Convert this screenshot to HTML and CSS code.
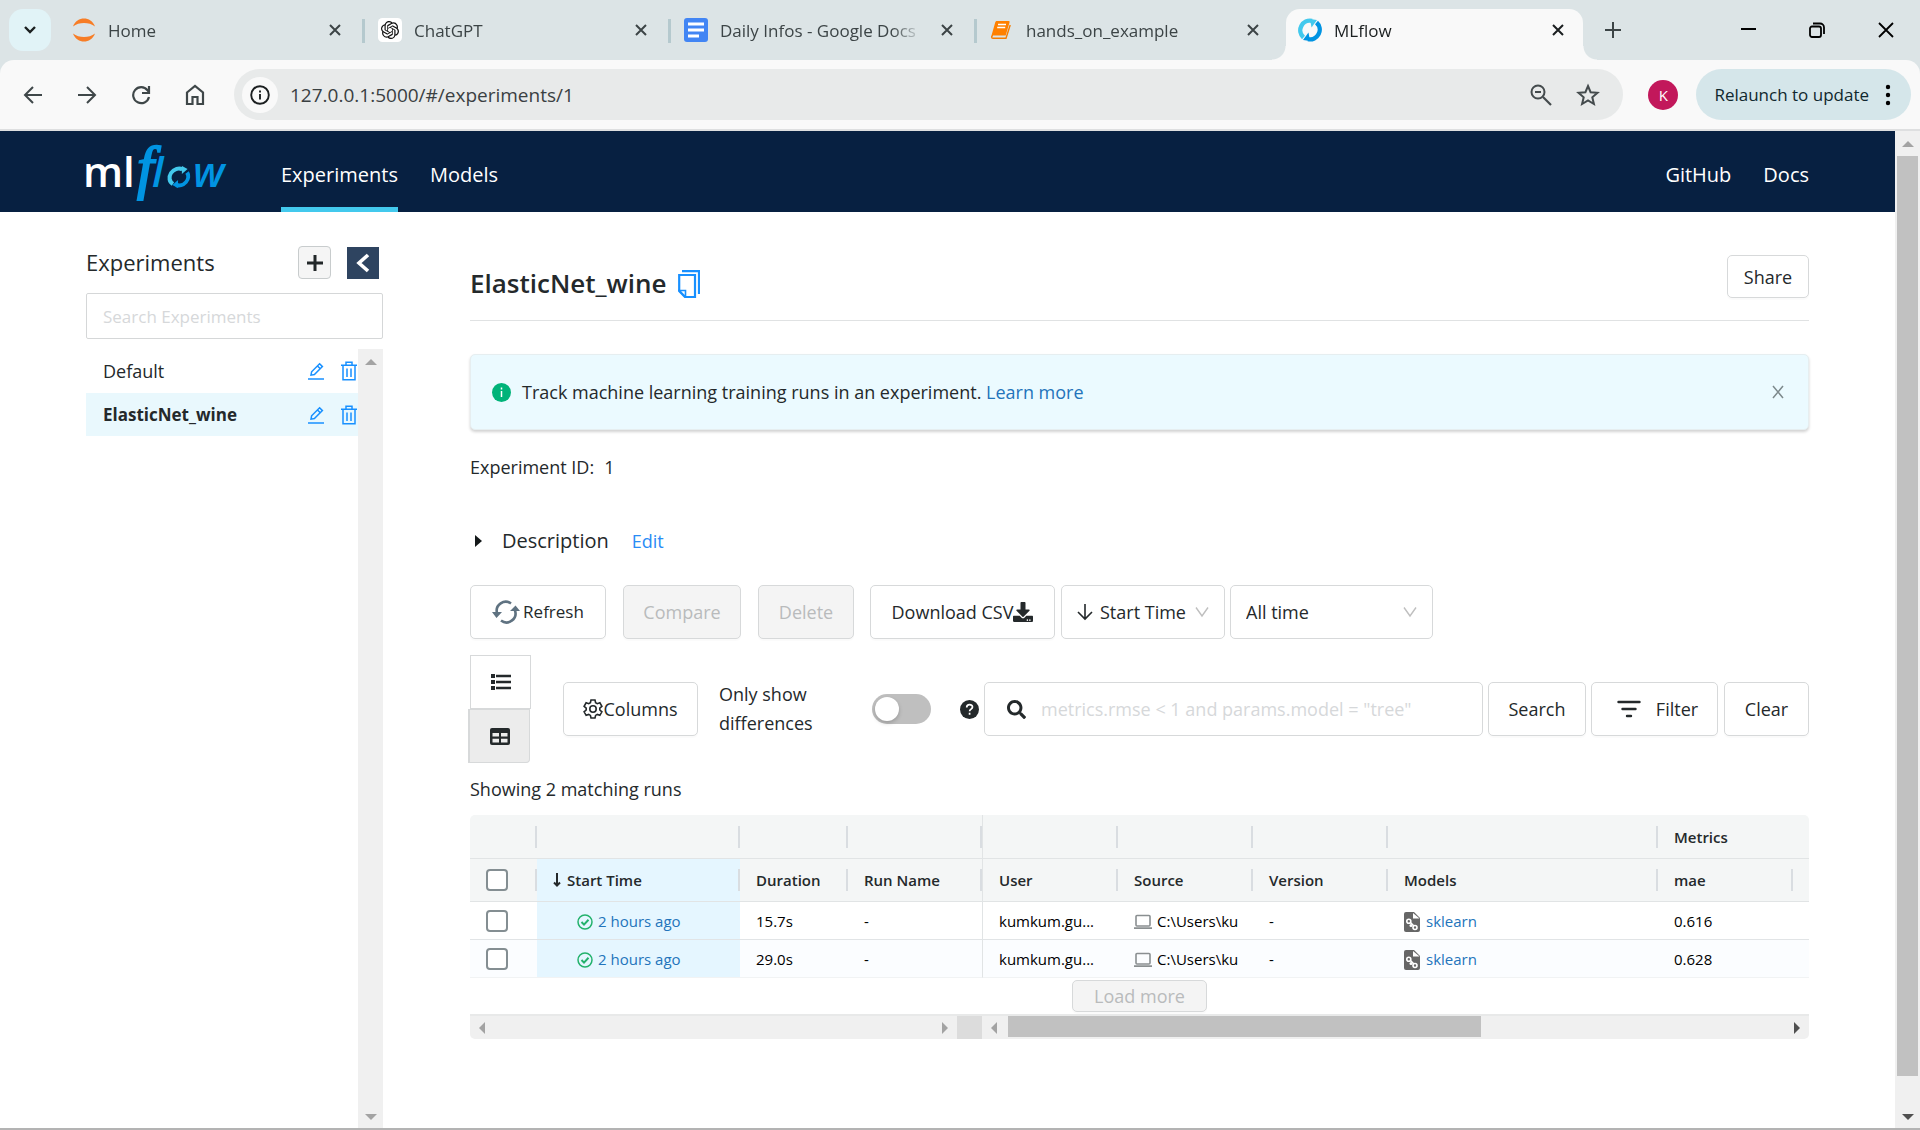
FILE: index.html
```html
<!DOCTYPE html>
<html lang="en">
<head>
<meta charset="utf-8">
<title>MLflow</title>
<link rel="stylesheet" href="styles.css">
</head>
<body>
<svg class="defs" aria-hidden="true">
  <symbol id="x" viewBox="0 0 14 14"><path d="M2 2l10 10M12 2L2 12" fill="none" stroke="currentColor" stroke-width="2"/></symbol>
  <symbol id="edit" viewBox="0 0 18 18"><path d="M1 17h16M4 13.200l.6-3.400 8-8 2.800 2.800-8 8zM10.500 4l2.800 2.800" fill="none" stroke="currentColor" stroke-width="1.500"/></symbol>
  <symbol id="trash" viewBox="0 0 16 20"><path d="M0 4.200h16M5 4V1.200h6V4M2 4.500V18.800h12V4.500M6 7.500v8.500M10 7.500v8.500" fill="none" stroke="currentColor" stroke-width="1.500"/></symbol>
  <symbol id="ok" viewBox="0 0 16 16"><circle cx="8" cy="8" r="7" fill="none" stroke="#23b26c" stroke-width="1.500"/><path d="M4.500 8l2.500 2.600 4.500-4.800" fill="none" stroke="#23b26c" stroke-width="2"/></symbol>
  <symbol id="laptop" viewBox="0 0 18 16"><rect x="2" y="1.500" width="14" height="10.500" rx="1" fill="none" stroke="#8a8f91" stroke-width="1.600"/><path d="M0 14.200h18" stroke="#8a8f91" stroke-width="1.800"/></symbol>
  <symbol id="model" viewBox="0 0 16 20"><path d="M2 0h8l6 6v12a2 2 0 0 1-2 2H2a2 2 0 0 1-2-2V2a2 2 0 0 1 2-2z" fill="#666"/><path d="M9 1v5.500h6.500z" fill="#fff"/><path d="M5 9l6 6" stroke="#fff" stroke-width="1.500"/><circle cx="4.800" cy="9.200" r="2" fill="#666" stroke="#fff" stroke-width="1.600"/><circle cx="11" cy="15.500" r="2" fill="#666" stroke="#fff" stroke-width="1.600"/><circle cx="7" cy="13.500" r="1.500" fill="#fff"/></symbol>
  <symbol id="chev" viewBox="0 0 14 12"><path d="M1 1.500l6 8.500 6-8.500" fill="none" stroke="#bfbfbf" stroke-width="1.400"/></symbol>
  <symbol id="cycle" viewBox="0 0 24 24"><path d="M5.500 19.500A9.700 9.700 0 0 1 14 2.800" fill="none" stroke="#43c9ed" stroke-width="4.400"/><path d="M12 1l7 1-5.500 7.500z" fill="#43c9ed"/><path d="M18.500 4.500A9.700 9.700 0 0 1 10 21.200" fill="none" stroke="#0194e2" stroke-width="4.400"/><path d="M12 23l-7-1 5.500-7.500z" fill="#0194e2"/></symbol>
</svg>

<header class="browser">
  <div class="tabstrip">
    <button class="tab-search" aria-label="Search tabs"><svg width="14" height="10" viewBox="0 0 14 10"><path d="M2 2l5 5 5-5" fill="none" stroke="#1b1f20" stroke-width="2.400"/></svg></button>
    <nav class="tabs" aria-label="Tabs">
      <div class="tab">
        <svg width="24" height="24" viewBox="0 0 24 24"><path d="M1 8.500C3 3 7.500.5 12 .5S21 3 23 8.500C20 6 16 5 12 5S4 6 1 8.500zM1 15.500C3 21 7.500 23.500 12 23.500s9-2.500 11-8c-3 2.500-7 3.500-11 3.500S4 18 1 15.500z" fill="#f77d26"/></svg>
        <span class="tab-title">Home</span><button class="tab-close" aria-label="Close tab"><svg width="14" height="14"><use href="#x"/></svg></button>
      </div>
      <div class="tab">
        <svg width="24" height="24" viewBox="-4 -4 32 32"><rect x="-4" y="-4" width="32" height="32" rx="6" fill="#fff"/><path d="M22.2819 9.8211a5.9847 5.9847 0 0 0-.5157-4.9108 6.0462 6.0462 0 0 0-6.5098-2.9A6.0651 6.0651 0 0 0 4.9807 4.1818a5.9847 5.9847 0 0 0-3.9977 2.9 6.0462 6.0462 0 0 0 .7427 7.0966 5.98 5.98 0 0 0 .511 4.9107 6.051 6.051 0 0 0 6.5146 2.9001A5.9847 5.9847 0 0 0 13.2599 24a6.0557 6.0557 0 0 0 5.7718-4.2058 5.9894 5.9894 0 0 0 3.9977-2.9001 6.0557 6.0557 0 0 0-.7475-7.0729zm-9.022 12.6081a4.4755 4.4755 0 0 1-2.8764-1.0408l.1419-.0804 4.7783-2.7582a.7948.7948 0 0 0 .3927-.6813v-6.7369l2.02 1.1686a.071.071 0 0 1 .038.052v5.5826a4.504 4.504 0 0 1-4.4945 4.4944zm-9.6607-4.1254a4.4708 4.4708 0 0 1-.5346-3.0137l.142.0852 4.783 2.7582a.7712.7712 0 0 0 .7806 0l5.8428-3.3685v2.3324a.0804.0804 0 0 1-.0332.0615L9.74 19.9502a4.4992 4.4992 0 0 1-6.1408-1.6464zM2.3408 7.8956a4.485 4.485 0 0 1 2.3655-1.9728V11.6a.7664.7664 0 0 0 .3879.6765l5.8144 3.3543-2.0201 1.1685a.0757.0757 0 0 1-.071 0l-4.8303-2.7865A4.504 4.504 0 0 1 2.3408 7.872zm16.5963 3.8558L13.1038 8.364 15.1192 7.2a.0757.0757 0 0 1 .071 0l4.8303 2.7913a4.4944 4.4944 0 0 1-.6765 8.1042v-5.6772a.79.79 0 0 0-.407-.667zm2.0107-3.0231l-.142-.0852-4.7735-2.7818a.7759.7759 0 0 0-.7854 0L9.409 9.2297V6.8974a.0662.0662 0 0 1 .0284-.0615l4.8303-2.7866a4.4992 4.4992 0 0 1 6.6802 4.66zM8.3065 12.863l-2.02-1.1638a.0804.0804 0 0 1-.038-.0567V6.0742a4.4992 4.4992 0 0 1 7.3757-3.4537l-.142.0805L8.704 5.459a.7948.7948 0 0 0-.3927.6813zm1.0976-2.3654l2.602-1.4998 2.6069 1.4998v2.9994l-2.5974 1.4997-2.6067-1.4997Z" fill="#111"/></svg>
        <span class="tab-title">ChatGPT</span><button class="tab-close" aria-label="Close tab"><svg width="14" height="14"><use href="#x"/></svg></button>
      </div>
      <div class="tab">
        <svg width="24" height="24" viewBox="0 0 24 24"><rect width="24" height="24" rx="3" fill="#4285f4"/><path d="M4 6h16M4 12h16M4 18h11" stroke="#fff" stroke-width="2.800"/></svg>
        <span class="tab-title">Daily Infos - Google Docs</span><button class="tab-close" aria-label="Close tab"><svg width="14" height="14"><use href="#x"/></svg></button>
      </div>
      <div class="tab">
        <svg width="24" height="24" viewBox="0 0 24 24"><path d="M3 17.500c-1.800 0-1.800 2.800 0 2.800h13L20.200 7" fill="none" stroke="#f57c00" stroke-width="1.400"/><path d="M7 3h11.500c1 0 1.300.7 1 1.500L15.700 17.500H1.500L5.200 4.500C5.500 3.500 6 3 7 3z" fill="#ff8000"/><path d="M8 6.500h8M7.200 9.500h8" stroke="#fff" stroke-width="1.300"/></svg>
        <span class="tab-title">hands_on_example</span><button class="tab-close" aria-label="Close tab"><svg width="14" height="14"><use href="#x"/></svg></button>
      </div>
      <div class="tab active">
        <svg width="24" height="24"><use href="#cycle"/></svg>
        <span class="tab-title">MLflow</span><button class="tab-close" aria-label="Close tab"><svg width="14" height="14"><use href="#x"/></svg></button>
      </div>
    </nav>
    <button class="new-tab" aria-label="New tab"><svg width="16" height="16" viewBox="0 0 16 16"><path d="M8 0v16M0 8h16" stroke="#3c4446" stroke-width="2"/></svg></button>
    <div class="window-buttons">
      <button aria-label="Minimize"><svg width="16" height="16" viewBox="0 0 16 16"><path d="M1 7h15" stroke="#000" stroke-width="2"/></svg></button>
      <button aria-label="Restore"><svg width="16" height="16" viewBox="0 0 16 16"><path d="M4 1.500h7a4 4 0 0 1 4 4V12" fill="none" stroke="#000" stroke-width="1.800"/><rect x="1" y="4.500" width="11" height="10.500" rx="2" fill="none" stroke="#000" stroke-width="1.800"/></svg></button>
      <button aria-label="Close window"><svg width="16" height="16" viewBox="0 0 16 16"><path d="M1 1l14 14M15 1L1 15" stroke="#000" stroke-width="1.800"/></svg></button>
    </div>
  </div>
  <div class="toolbar">
    <div class="nav-buttons">
      <button aria-label="Back"><svg width="20" height="20" viewBox="0 0 20 20"><path d="M19 10H2M10 2l-8 8 8 8" fill="none" stroke="#3f4749" stroke-width="2"/></svg></button>
      <button aria-label="Forward"><svg width="20" height="20" viewBox="0 0 20 20"><path d="M1 10h17M10 2l8 8-8 8" fill="none" stroke="#3f4749" stroke-width="2"/></svg></button>
      <button aria-label="Reload"><svg width="20" height="20" viewBox="0 0 20 20"><path d="M18 12a8 8 0 1 1-1.500-6.800L18 7" fill="none" stroke="#3f4749" stroke-width="2.200"/><path d="M18 1v7h-7" fill="none" stroke="#3f4749" stroke-width="2.200"/></svg></button>
      <button aria-label="Home"><svg width="20" height="22" viewBox="0 0 20 22"><path d="M2 8.500L10 2l8 6.500V20h-5.500v-7h-5v7H2z" fill="none" stroke="#3f4749" stroke-width="2.200"/></svg></button>
    </div>
    <div class="address">
      <button class="site-info" aria-label="Site information"><svg width="20" height="20" viewBox="0 0 20 20"><circle cx="10" cy="10" r="8.800" fill="none" stroke="#1b1f20" stroke-width="1.900"/><path d="M10 9v5.500M10 5.500v2" stroke="#1b1f20" stroke-width="1.900"/></svg></button>
      <input class="url" type="text" aria-label="Address" value="127.0.0.1:5000/#/experiments/1">
      <button class="bare" aria-label="Zoom"><svg width="22" height="22" viewBox="0 0 22 22"><circle cx="8" cy="8" r="6.500" fill="none" stroke="#444b4d" stroke-width="2"/><path d="M13 13l8 8M5 8h6" stroke="#444b4d" stroke-width="2.200"/></svg></button>
      <button class="bare" aria-label="Bookmark"><svg width="24" height="24" viewBox="0 0 24 24"><path d="M12 3l2.600 6.200 6.900.6-5.200 4.500 1.600 6.700L12 17.400 6.100 21l1.600-6.700-5.200-4.500 6.900-.6z" fill="none" stroke="#444b4d" stroke-width="2"/></svg></button>
    </div>
    <button class="avatar" aria-label="Profile">K</button>
    <button class="relaunch">Relaunch to update<svg width="6" height="22" viewBox="0 0 6 22"><circle cx="3" cy="3" r="2.200"/><circle cx="3" cy="11" r="2.200"/><circle cx="3" cy="19" r="2.200"/></svg></button>
  </div>
</header>

<div class="viewport">
  <div class="page">
    <header class="app-bar">
      <a class="logo" href="#" aria-label="MLflow">
        <svg width="142" height="56" viewBox="0 0 142 56">
          <text x="-3" y="43" class="logo-ml">ml</text>
          <text x="51" y="43" class="logo-f">f</text>
          <text x="66" y="43" class="logo-l">l</text>
          <g transform="translate(84 22) skewX(-8)" fill="none" stroke-width="4"><path d="M5.500 18A8 8 0 0 1 13 3.500" stroke="#43c9ed"/><path d="M12 0l6 3-5 5z" fill="#43c9ed" stroke="none"/><path d="M18 6.500A8 8 0 0 1 9 19" stroke="#0194e2"/><path d="M11 22l-6-3 5-5z" fill="#0194e2" stroke="none"/></g>
          <text x="107" y="43" class="logo-w">w</text>
        </svg>
      </a>
      <nav class="app-nav">
        <a class="current" href="#">Experiments</a>
        <a href="#">Models</a>
        <a class="push" href="#">GitHub</a>
        <a href="#">Docs</a>
      </nav>
    </header>

    <div class="columns">
      <aside class="sidebar">
        <div class="side-head">
          <h2>Experiments</h2>
          <button class="add" aria-label="New experiment"><svg width="16" height="16" viewBox="0 0 16 16"><path d="M8 0v16M0 8h16" stroke="#222729" stroke-width="3"/></svg></button>
          <button class="collapse" aria-label="Collapse"><svg width="14" height="20" viewBox="0 0 14 20"><path d="M12 2L3 10l9 8" fill="none" stroke="#fff" stroke-width="3.600"/></svg></button>
        </div>
        <input class="side-search" type="text" placeholder="Search Experiments" aria-label="Search experiments">
        <div class="side-list">
          <ul>
            <li><a href="#">Default</a><button aria-label="Rename"><svg width="18" height="18"><use href="#edit"/></svg></button><button aria-label="Delete"><svg width="16" height="20"><use href="#trash"/></svg></button></li>
            <li class="selected"><a href="#">ElasticNet_wine</a><button aria-label="Rename"><svg width="18" height="18"><use href="#edit"/></svg></button><button aria-label="Delete"><svg width="16" height="20"><use href="#trash"/></svg></button></li>
          </ul>
          <div class="side-scroll"><i class="tri up"></i><i class="tri down"></i></div>
        </div>
      </aside>

      <main>
        <div class="title-row">
          <h1>ElasticNet_wine</h1>
          <button class="copy" aria-label="Copy name"><svg width="22" height="28" viewBox="0 0 22 28"><path d="M4 1.200h17V24" fill="none" stroke="#1890ff" stroke-width="2.200"/><path d="M1.200 5H17v22H7L1.200 21z" fill="none" stroke="#1890ff" stroke-width="2.200"/><path d="M1.200 20.500H7.500V27z" fill="none" stroke="#1890ff" stroke-width="1.600"/></svg></button>
          <button class="btn share">Share</button>
        </div>
        <div class="alert" role="note">
          <svg width="19" height="19" viewBox="0 0 19 19"><circle cx="9.500" cy="9.500" r="9.500" fill="#00b379"/><path d="M9.500 8v6M9.500 4.500v2" stroke="#fff" stroke-width="1.500"/></svg>
          <p>Track machine learning training runs in an experiment. <a href="#">Learn more</a></p>
          <button class="bare" aria-label="Dismiss"><svg width="14" height="14" viewBox="0 0 14 14"><path d="M2 1l10 12M12 1L2 13" stroke="#7d898c" stroke-width="1.500"/></svg></button>
        </div>
        <p class="exp-id">Experiment ID:<span>1</span></p>
        <div class="description">
          <i class="tri right"></i><h3>Description</h3><a href="#">Edit</a>
        </div>

        <div class="actions">
          <button class="btn refresh"><svg width="28" height="24" viewBox="0 0 28 24"><path d="M5 13A9 9 0 0 1 19 3.500M23 10.500A9 9 0 0 1 9 20.500" fill="none" stroke="#5f7281" stroke-width="2.600"/><path d="M0 12h10l-5.500 6zM18 11h10l-4.500-5.500z" fill="#5f7281"/></svg>Refresh</button>
          <button class="btn compare" disabled>Compare</button>
          <button class="btn delete" disabled>Delete</button>
          <button class="btn download">Download CSV<svg width="20" height="20" viewBox="0 0 512 512"><path d="M216 0h80c13.300 0 24 10.700 24 24v168h87.700c17.800 0 26.700 21.500 14.100 34.100L269.700 378.300c-7.500 7.500-19.800 7.500-27.300 0L90.100 226.100c-12.600-12.600-3.700-34.100 14.100-34.100H192V24c0-13.300 10.700-24 24-24zm296 376v112c0 13.300-10.700 24-24 24H24c-13.300 0-24-10.700-24-24V376c0-13.300 10.700-24 24-24h146.700l49 49c20.100 20.100 52.500 20.100 72.600 0l49-49H488c13.300 0 24 10.700 24 24zm-124 88c0-11-9-20-20-20s-20 9-20 20 9 20 20 20 20-9 20-20zm64 0c0-11-9-20-20-20s-20 9-20 20 9 20 20 20 20-9 20-20z" fill="#24292b"/></svg></button>
          <div class="picker sort"><svg width="16" height="18" viewBox="0 0 16 18"><path d="M8 1v15M1 9l7 7 7-7" fill="none" stroke="#24292b" stroke-width="1.600"/></svg><select aria-label="Sort by"><option>Start Time</option></select><svg class="chev" width="14" height="12"><use href="#chev"/></svg></div>
          <div class="picker range"><select aria-label="Time range"><option>All time</option></select><svg class="chev" width="14" height="12"><use href="#chev"/></svg></div>
        </div>

        <div class="filters">
          <div class="view-toggle">
            <button aria-label="List view"><svg width="20" height="16" viewBox="0 0 20 16"><path d="M5 2h15M5 8h15M5 14h15" stroke="#24292b" stroke-width="2.400"/><path d="M0 2h4M0 8h4M0 14h4" stroke="#24292b" stroke-width="4"/></svg></button>
            <button class="on" aria-label="Table view"><svg width="20" height="17" viewBox="0 0 20 17"><rect width="20" height="17" rx="2" fill="#24292b"/><path d="M2.500 5h6.500v3.500H2.500zM11 5h6.500v3.500H11zM2.500 10.700h6.500v3.800H2.500zM11 10.700h6.500v3.800H11z" fill="#ececec"/></svg></button>
          </div>
          <button class="btn cols"><svg width="20" height="20" viewBox="0 0 20 20"><path d="M8 1h4l.6 2.700 1.700 1 2.600-.9 2 3.500-2.100 1.800v1.900l2.100 1.800-2 3.500-2.600-.9-1.700 1L12 19H8l-.6-2.600-1.700-1-2.600.9-2-3.500L3.200 11V9.100L1.100 7.300l2-3.500 2.600.9 1.700-1z" fill="none" stroke="#24292b" stroke-width="1.600"/><circle cx="10" cy="10" r="3.200" fill="none" stroke="#24292b" stroke-width="1.600"/></svg>Columns</button>
          <label class="diff" for="diff">Only show differences</label>
          <input class="switch" id="diff" type="checkbox" role="switch">
          <svg class="help" width="19" height="19" viewBox="0 0 19 19"><circle cx="9.500" cy="9.500" r="9.500" fill="#24292b"/><path d="M6.700 7.500c0-3.800 5.800-3.600 5.800-.4 0 2-2.900 2-2.900 4.100M9.600 12.800v2" fill="none" stroke="#fff" stroke-width="1.700"/></svg>
          <div class="query"><svg width="19" height="19" viewBox="0 0 512 512"><path d="M505 442.700L405.300 343c-4.500-4.500-10.600-7-17-7H372c27.600-35.300 44-79.700 44-128C416 93.100 322.900 0 208 0S0 93.100 0 208s93.100 208 208 208c48.300 0 92.700-16.400 128-44v16.300c0 6.400 2.500 12.500 7 17l99.700 99.700c9.400 9.400 24.600 9.400 33.900 0l28.300-28.300c9.400-9.400 9.400-24.600.1-34zM208 336c-70.700 0-128-57.200-128-128 0-70.700 57.200-128 128-128 70.700 0 128 57.200 128 128 0 70.700-57.200 128-128 128z" fill="#24292b"/></svg><input type="text" aria-label="Search runs" placeholder="metrics.rmse &lt; 1 and params.model = &quot;tree&quot;"></div>
          <button class="btn search">Search</button>
          <button class="btn filter"><svg width="24" height="18" viewBox="0 0 24 18"><path d="M1.500 2h21M5.500 9h13M10 16h4" stroke="#24292b" stroke-width="2.400" stroke-linecap="round"/></svg>Filter</button>
          <button class="btn clear">Clear</button>
        </div>

        <p class="count">Showing 2 matching runs</p>

        <div class="grid">
          <table>
            <colgroup><col class="c-check"><col class="c-start"><col class="c-dur"><col class="c-std"><col class="c-std"><col class="c-std"><col class="c-std"><col class="c-models"><col class="c-std"><col></colgroup>
            <thead>
              <tr class="groups"><th></th><th></th><th></th><th class="pin"></th><th></th><th></th><th></th><th></th><th class="open" colspan="2">Metrics</th></tr>
              <tr><th><input type="checkbox" aria-label="Select all runs"></th><th class="sorted"><svg width="8" height="14" viewBox="0 0 8 14"><path d="M4 0v12M1 9.500l3 3 3-3" fill="none" stroke="#24292b" stroke-width="2"/></svg>Start Time</th><th>Duration</th><th class="pin">Run Name</th><th>User</th><th>Source</th><th>Version</th><th>Models</th><th>mae</th><th class="open"></th></tr>
            </thead>
            <tbody>
              <tr><td><input type="checkbox" aria-label="Select run 1"></td><td class="sorted"><svg width="16" height="16"><use href="#ok"/></svg><a href="#">2 hours ago</a></td><td>15.7s</td><td class="pin">-</td><td>kumkum.gu...</td><td><div class="with-icon"><svg width="18" height="16"><use href="#laptop"/></svg>C:\Users\ku</div></td><td>-</td><td><div class="with-icon"><svg width="16" height="20"><use href="#model"/></svg><a href="#">sklearn</a></div></td><td>0.616</td><td></td></tr>
              <tr><td><input type="checkbox" aria-label="Select run 2"></td><td class="sorted"><svg width="16" height="16"><use href="#ok"/></svg><a href="#">2 hours ago</a></td><td>29.0s</td><td class="pin">-</td><td>kumkum.gu...</td><td><div class="with-icon"><svg width="18" height="16"><use href="#laptop"/></svg>C:\Users\ku</div></td><td>-</td><td><div class="with-icon"><svg width="16" height="20"><use href="#model"/></svg><a href="#">sklearn</a></div></td><td>0.628</td><td></td></tr>
            </tbody>
          </table>
          <button class="btn more" disabled>Load more</button>
          <div class="grid-scroll">
            <div class="track pinned"><i class="tri left"></i><i class="tri right"></i></div>
            <div class="corner"></div>
            <div class="track"><i class="tri left"></i><div class="rail"><div class="thumb"></div></div><i class="tri right dark"></i></div>
          </div>
        </div>
      </main>
    </div>
  </div>
  <div class="page-scroll"><i class="tri up"></i><div class="rail"><div class="thumb"></div></div><i class="tri down dark"></i></div>
</div>
</body>
</html>
```
FILE: styles.css
```css
* { box-sizing: border-box; }
body {
  margin: 0;
  min-height: 100vh;
  display: flex;
  flex-direction: column;
  font: 18px/28px "Open Sans", "Noto Sans", sans-serif;
  color: #24292b;
  background: #fff;
  border-bottom: 2px solid #b3b3b3;
}
button, input, select { font: inherit; color: inherit; }
button { padding: 0; border: 0; background: none; display: flex; align-items: center; justify-content: center; }
h1, h2, h3, p, ul { margin: 0; padding: 0; font-weight: 400; }
svg { flex: none; }
a { color: #2374bb; text-decoration: none; }
.defs { position: absolute; width: 0; height: 0; }

/* browser frame */
.browser { background: #dce4e6; }
.tabstrip { display: flex; align-items: center; height: 60px; padding-left: 9px; }
.tab-search { width: 42px; height: 42px; border-radius: 14px; background: #e1f3f7; }
.tabs { display: flex; flex: 0 1 1524px; min-width: 0; margin-left: 8px; align-self: stretch; align-items: flex-end; }
.tab { display: flex; align-items: center; flex: 0 1 306px; min-width: 0; height: 51px; padding: 0 23px 9px 13px; font-size: 17px; color: #3c4446; background: linear-gradient(#b5c9ce, #b5c9ce) no-repeat right 10px/3px 24px; }
.tab:nth-child(4) { background: none; }
.tab-title { flex: 1; min-width: 0; margin: 0 12px; padding-top: 2px; overflow: hidden; white-space: nowrap; -webkit-mask-image: linear-gradient(to right, #000 172px, transparent 202px); mask-image: linear-gradient(to right, #000 172px, transparent 202px); }
.tab.active { position: relative; flex-basis: 297px; margin-left: 3px; padding-left: 12px; padding-right: 18px; background: #f9f9f9; border-radius: 14px 14px 0 0; color: #1b1f20; }
.tab.active::before, .tab.active::after { content: ""; position: absolute; bottom: 0; width: 14px; height: 14px; }
.tab.active::before { left: -14px; background: radial-gradient(circle at 0 0, transparent 13px, #f9f9f9 14px); }
.tab.active::after { right: -14px; background: radial-gradient(circle at 100% 0, transparent 13px, #f9f9f9 14px); }
.new-tab { width: 60px; height: 42px; }
.window-buttons { display: flex; margin-left: auto; }
.window-buttons button { width: 69px; height: 60px; }
.toolbar { display: flex; align-items: center; height: 71px; padding: 0 9px 0 6px; background: #f9f9f9; border-radius: 14px 14px 0 0; border-bottom: 2px solid #dedfe0; }
.nav-buttons { display: flex; }
.nav-buttons button { width: 54px; height: 50px; }
.address { flex: 1; display: flex; align-items: center; gap: 24px; height: 51px; margin-left: 12px; padding: 0 23px 0 8px; background: #e8eaea; border-radius: 26px; }
.site-info { width: 36px; height: 36px; border-radius: 50%; background: #f9f9f9; }
.url { flex: 1; min-width: 0; margin-left: -12px; padding: 0; border: 0; outline: 0; background: none; font-size: 19px; color: #3a4042; }
.avatar { width: 30px; height: 30px; margin: 0 18px 0 25px; border-radius: 50%; background: #c2185b; color: #fff; font-size: 15px; }
.relaunch { gap: 16px; height: 51px; padding: 0 20px 0 18px; border-radius: 26px; background: #d5e6ea; font-size: 17px; color: #10282e; }

/* page area */
.viewport { flex: 1; display: flex; }
.page { flex: 1; min-width: 0; display: flex; flex-direction: column; }
.page-scroll { display: flex; flex-direction: column; align-items: center; justify-content: space-between; width: 25px; padding: 10px 2px 8px; background: #f0f0f0; }
.page-scroll .rail { flex: 1; align-self: stretch; margin: 9px 0 10px; }
.page-scroll .thumb { height: 97%; background: #c1c1c1; }
.tri { display: block; width: 0; height: 0; border: 6px solid transparent; }
.tri.up { border-top: 0; border-bottom-color: #a3a3a3; }
.tri.down { border-bottom: 0; border-top-color: #a3a3a3; }
.tri.left { border-left: 0; border-right-color: #a3a3a3; }
.tri.right { border-right: 0; border-left-color: #a3a3a3; }
.tri.right.dark { border-left-color: #505050; }
.tri.down.dark { border-top-color: #505050; }

.app-bar { display: flex; height: 81px; padding: 0 86px; background: #072041; }
.logo { align-self: center; height: 56px; }
.logo svg { overflow: visible; }
.logo text { font-family: "Open Sans", sans-serif; font-size: 42px; font-weight: 600; fill: #0194e2; }
.logo .logo-ml { fill: #fff; }
.logo .logo-l, .logo .logo-w { font-style: italic; }
.logo .logo-f { font-family: "Liberation Serif", serif; font-size: 60px; font-style: italic; font-weight: 400; stroke: #0194e2; stroke-width: 2px; }
.app-nav { flex: 1; display: flex; gap: 32px; margin-left: 53px; }
.app-nav a { padding-top: 30px; font-size: 20px; color: #fff; border-bottom: 5px solid transparent; }
.app-nav .current { border-color: #43c9ed; }
.app-nav .push { margin-left: auto; }

.columns { flex: 1; display: flex; gap: 87px; padding: 0 86px; }
.sidebar { flex: 0 0 297px; display: flex; flex-direction: column; padding-top: 34px; }
.side-head { display: flex; align-items: center; padding-right: 4px; }
.side-head h2 { flex: 1; font-size: 22px; line-height: 33px; }
.add { width: 33px; height: 33px; margin-right: 16px; border: 1px solid #c8cccd; border-radius: 4px; background: #f5f5f5; }
.collapse { width: 32px; height: 32px; background: #2e4460; }
.side-search { height: 46px; margin-top: 14px; padding: 0 16px; border: 1px solid #d5d7d8; border-radius: 2px; font-size: 17px; outline: 0; }
::placeholder { color: #d6d8da; opacity: 1; }
.side-list { flex: 1; display: flex; margin-top: 10px; }
.side-list ul { flex: 1; list-style: none; }
.side-list li { display: flex; align-items: center; height: 43px; margin-bottom: 1px; padding-left: 17px; }
.side-list li a { flex: 1; color: #24292b; }
.side-list li.selected { background: #e9f8fd; }
.side-list li.selected a { font-weight: 700; font-size: 17px; }
.side-list button { margin-right: 1px; color: #1890ff; }
.side-list button + button { margin-left: 15px; }
.side-scroll { display: flex; flex-direction: column; justify-content: space-between; align-items: center; width: 25px; padding: 10px 0 8px; background: #f0f0f0; }

main { flex: 1; min-width: 0; padding-top: 43px; }
.title-row { display: flex; align-items: flex-end; padding-bottom: 22px; border-bottom: 1px solid #e0e2e3; }
h1 { font-size: 26px; line-height: 30px; font-weight: 600; }
.copy { margin-left: 11px; }
.btn { height: 54px; border: 1px solid #d7d9da; border-radius: 5px; background: #fff; box-shadow: 0 2px 1px rgba(0,0,0,.02); white-space: nowrap; }
.btn:disabled { background: #f4f4f4; color: #b9bbbc; }
.share { height: 43px; width: 82px; margin-left: auto; }
.alert { display: flex; align-items: center; height: 76px; margin-top: 33px; padding: 0 23px 0 21px; background: #ebfaff; border: 1px solid #e6eef0; border-radius: 5px; box-shadow: 0 2px 3px rgba(0,0,0,.18); }
.alert p { flex: 1; margin-left: 11px; }
.exp-id { margin-top: 23px; }
.exp-id span { margin-left: 10px; }
.description { display: flex; align-items: center; margin-top: 46px; padding-left: 5px; }
.description h3 { margin: 0 23px 0 20px; font-size: 20px; }
.description a { color: #2a8cf5; }
.description .tri { border-left-width: 7px; border-left-color: #15191a; }

.actions { display: flex; margin-top: 30px; }
.refresh { width: 136px; gap: 3px; font-size: 17px; }
.compare { width: 118px; margin-left: 17px; }
.delete { width: 96px; margin-left: 17px; }
.download { width: 185px; margin-left: 16px; }
.picker { display: flex; align-items: center; height: 54px; border: 1px solid #d7d9da; border-radius: 5px; padding: 0 15px; }
.picker select { flex: 1; min-width: 0; appearance: none; border: 0; padding: 0; background: none; outline: 0; }
.sort { width: 164px; margin-left: 6px; }
.sort select { margin-left: 7px; }
.range { width: 203px; margin-left: 5px; }

.filters { display: flex; align-items: center; margin-top: 16px; }
.view-toggle { margin-left: -2px; }
.view-toggle button { width: 61px; height: 54px; margin-left: 2px; border: 1px solid #d7d9da; }
.view-toggle .on { width: 62px; margin-left: 0; background: #ececec; border-left-width: 2px; border-radius: 0 0 4px 0; }
.cols { width: 135px; margin-left: 32px; }
.diff { width: 153px; padding: 0 40px 0 0; margin-left: 21px; line-height: 29px; }
.switch { appearance: none; width: 59px; height: 30px; margin: 0 29px 0 0; padding: 3px; border-radius: 15px; background: #bfbfbf; }
.switch::before { content: ""; display: block; width: 24px; height: 24px; border-radius: 50%; background: #fff; box-shadow: 0 2px 4px rgba(0,0,0,.2); }
.query { flex: 1; min-width: 0; display: flex; align-items: center; gap: 15px; height: 54px; margin: 0 5px; padding: 0 22px; border: 1px solid #d7d9da; border-radius: 5px; }
.query input { flex: 1; min-width: 0; border: 0; padding: 0; outline: 0; background: none; }
.search { width: 98px; }
.filter { width: 127px; margin: 0 6px 0 5px; padding-left: 6px; gap: 15px; }
.clear { width: 85px; }
.count { margin: 12px 0; }

.grid { border-radius: 5px; overflow: hidden; }
table { width: 100%; table-layout: fixed; border-collapse: separate; border-spacing: 0; font-size: 15px; line-height: 20px; }
.c-check { width: 67px; }
.c-start { width: 203px; }
.c-dur { width: 108px; }
.c-std { width: 135px; }
.c-models { width: 270px; }
th, td { padding: 0 16px; text-align: left; white-space: nowrap; }
th { height: 43px; font-weight: 600; background: linear-gradient(#d9dde1, #d9dde1) no-repeat right center/2px 22px #f4f6f6; border-bottom: 1px solid #e1e4e5; }
.groups th { height: 44px; }
th.open { background-image: none; }
td { height: 38px; color: #000; border-bottom: 1px solid #e1e4e6; }
tr:nth-child(2) td { background: #fbfdff; border-bottom-color: #f1f3f4; }
th.sorted, tr td.sorted, tr:nth-child(2) td.sorted { background-color: #e5f6ff; }
td.sorted { padding-left: 40px; }
.pin { border-right: 1px solid #e1e4e5; }
td svg { vertical-align: middle; margin-right: 5px; }
th svg { vertical-align: -1px; margin-right: 6px; }
.with-icon { display: flex; align-items: center; }
.with-icon svg { margin: 3px 6px 0 0; }
.with-icon svg[width="18"] { margin-right: 5px; }
td input, th input { appearance: none; display: block; width: 22px; height: 22px; margin: 0; border: 2px solid #848e92; border-radius: 4px; background: #fff; }
.more { width: 135px; height: 32px; margin: 2px auto; }
.grid-scroll { display: flex; height: 25px; border-top: 2px solid #e8e9e9; background: #f0f0f0; }
.track { flex: 1; display: flex; align-items: center; justify-content: space-between; padding: 0 9px; }
.track.pinned { flex: 0 0 487px; }
.corner { flex: 0 0 25px; background: #dcdcdc; }
.track .rail { flex: 1; align-self: stretch; margin: 0 10px 2px 11px; }
.track .thumb { width: 61%; height: 100%; background: #c1c1c1; }
```
